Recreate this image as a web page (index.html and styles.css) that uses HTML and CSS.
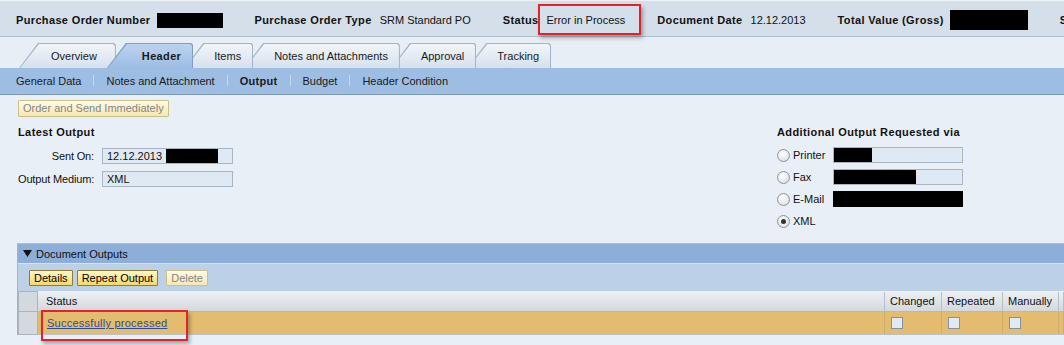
FILE: index.html
```html
<!DOCTYPE html>
<html lang="en">
  <head>
    <meta charset="UTF-8" />
    <meta name="viewport" content="width=device-width, initial-scale=1.0" />
    <title>Purchase Order - Output</title>
    <link rel="stylesheet" href="styles.css">
  </head>
  <body>
    <div class="po-header">
      <div class="hd-group">
        <span class="hd-label">Purchase Order Number</span>
        <span class="redact redact-po"></span>
      </div>
      <div class="hd-group">
        <span class="hd-label">Purchase Order Type</span>
        <span>SRM Standard PO</span>
      </div>
      <div class="hd-group">
        <span class="hd-label">Status</span>
        <span>Error in Process</span>
      </div>
      <div class="hd-group">
        <span class="hd-label">Document Date</span>
        <span>12.12.2013</span>
      </div>
      <div class="hd-group">
        <span class="hd-label">Total Value (Gross)</span>
        <span class="redact redact-total"></span>
      </div>
      <div class="hd-group">
        <span class="hd-label">Supplier</span>
      </div>
    </div>

    <div class="tabstrip">
      <div class="tab">Overview</div>
      <div class="tab tab-active">Header</div>
      <div class="tab">Items</div>
      <div class="tab">Notes and Attachments</div>
      <div class="tab">Approval</div>
      <div class="tab">Tracking</div>
    </div>

    <div class="subnav">
      <span>General Data</span>
      <span class="sep"></span>
      <span>Notes and Attachment</span>
      <span class="sep"></span>
      <span class="current">Output</span>
      <span class="sep"></span>
      <span>Budget</span>
      <span class="sep"></span>
      <span>Header Condition</span>
    </div>

    <div class="content">
      <button class="btn btn-off btn-order">Order and Send Immediately</button>

      <div class="output-cols">
        <div class="latest">
          <div class="section-title">Latest Output</div>
          <div class="field-row">
            <span class="field-label">Sent On:</span>
            <span class="field">12.12.2013<span class="redact redact-time"></span></span>
          </div>
          <div class="field-row">
            <span class="field-label">Output Medium:</span>
            <span class="field">XML</span>
          </div>
        </div>

        <div class="additional">
          <div class="section-title">Additional Output Requested via</div>
          <div class="radio-row">
            <span class="radio"></span>
            <span class="radio-label">Printer</span>
            <span class="field field-wide"><span class="redact redact-printer"></span></span>
          </div>
          <div class="radio-row">
            <span class="radio"></span>
            <span class="radio-label">Fax</span>
            <span class="field field-wide"><span class="redact redact-fax"></span></span>
          </div>
          <div class="radio-row">
            <span class="radio"></span>
            <span class="radio-label">E-Mail</span>
            <span class="field field-wide field-black"></span>
          </div>
          <div class="radio-row">
            <span class="radio radio-on"></span>
            <span class="radio-label">XML</span>
          </div>
        </div>
      </div>

      <div class="panel">
        <div class="panel-title">
          <svg width="9" height="7" viewBox="0 0 9 7"><path d="M0 0H9L4.5 7Z" fill="#111"/></svg>
          <span>Document Outputs</span>
        </div>
        <div class="toolbar">
          <button class="btn">Details</button>
          <button class="btn">Repeat Output</button>
          <button class="btn btn-off btn-delete">Delete</button>
        </div>
        <table class="grid">
          <colgroup>
            <col class="col-sel">
            <col>
            <col class="col-changed">
            <col class="col-repeated">
            <col class="col-manually">
            <col class="col-rest">
          </colgroup>
          <tr>
            <th class="sel"></th>
            <th class="th-status">Status</th>
            <th>Changed</th>
            <th>Repeated</th>
            <th>Manually</th>
            <th></th>
          </tr>
          <tr class="row-selected">
            <td class="sel"></td>
            <td class="td-status"><a href="#">Successfully processed</a></td>
            <td><span class="check"></span></td>
            <td><span class="check"></span></td>
            <td><span class="check"></span></td>
            <td></td>
          </tr>
        </table>
      </div>
    </div>

    <!-- red highlight marks from the screenshot -->
    <div class="mark mark-status"></div>
    <div class="mark mark-row"></div>
  </body>
</html>
```

FILE: styles.css
```css
* {
  box-sizing: border-box;
}

body {
  margin: 0;
  width: 1064px;
  height: 345px;
  overflow: hidden;
  position: relative;
  background: #e9eff6;
  font-family: "Liberation Sans", Arial, sans-serif;
  font-size: 11px;
  color: #111;
}

/* top header with PO facts */
.po-header {
  height: 37px;
  background: #d4dfea;
  border-top: 1px solid #eef3f8;
  border-bottom: 1px solid #aebfd0;
  display: flex;
  align-items: center;
  gap: 32px;
  padding: 3px 0 0 16px;
  white-space: nowrap;
  overflow: hidden;
}

.hd-group {
  display: flex;
  align-items: center;
  gap: 8px;
}

.hd-label {
  font-weight: bold;
  letter-spacing: 0.35px;
}

.redact {
  display: inline-block;
  background: #000;
}

.redact-po {
  width: 66px;
  height: 15px;
  margin-left: -2px;
}

.redact-total {
  width: 78px;
  height: 20px;
  margin-left: -2px;
}

/* tabs */
.tabstrip {
  height: 31px;
  background: #e7eef5;
  display: flex;
  align-items: flex-end;
  padding-left: 19px;
}

.tab {
  position: relative;
  height: 25px;
  line-height: 26px;
  padding: 0 12px 0 30px;
  margin-left: -9px;
  color: #1a1a1a;
  white-space: nowrap;
}

.tab::before,
.tab::after {
  content: "";
  position: absolute;
  z-index: -1;
  clip-path: polygon(0 100%, 19px 0, calc(100% - 2px) 0, 100% 2px, 100% 100%);
}

.tab::before {
  inset: 0;
  background: #a2b4c8;
}

.tab::after {
  inset: 1px 1px 0 1px;
  background: linear-gradient(#f1f5fa, #d6e1ee);
}

.tab:nth-child(1) {
  margin-left: 0;
  padding: 0 19px 0 32px;
  z-index: 6;
}

.tab:nth-child(3) {
  z-index: 4;
}

.tab:nth-child(4) {
  z-index: 3;
}

.tab:nth-child(5) {
  z-index: 2;
}

.tab:nth-child(6) {
  z-index: 1;
}

.tab-active {
  z-index: 10;
  padding-left: 35px;
  font-weight: bold;
  letter-spacing: 0.35px;
}

.tab-active::before {
  background: #7f9dc3;
}

.tab-active::after {
  background: linear-gradient(#bcd3ee, #9dbde3);
}

/* second level navigation */
.subnav {
  height: 27px;
  background: #9dbde3;
  border-bottom: 1px solid #7d98b9;
  display: flex;
  align-items: center;
  padding: 0 0 1px 16px;
  color: #1a1a1a;
}

.subnav .sep {
  width: 1px;
  height: 11px;
  background: #c9d9ec;
  margin: 0 12px;
}

.subnav .current {
  font-weight: bold;
  letter-spacing: 0.3px;
}

/* page content */
.content {
  padding: 5px 0 0 18px;
}

.btn {
  font: inherit;
  height: 16px;
  padding: 0 4px;
  margin: 0;
  border: 1px solid #8d7b3a;
  border-radius: 1px;
  background: linear-gradient(#fff6c6, #f5d96b);
  color: #000;
  line-height: 13px;
  cursor: pointer;
}

.btn-off {
  border-color: #cdbf8c;
  background: linear-gradient(#fffbe4, #f6e8b3);
  color: #858585;
  cursor: default;
}

.btn-order {
  height: 17px;
  padding: 0 4px;
}

.output-cols {
  display: flex;
  justify-content: space-between;
  margin-top: 8px;
}

.section-title {
  font-weight: bold;
  letter-spacing: 0.4px;
  line-height: 14px;
  margin-bottom: 5px;
}

.field-row {
  display: flex;
  align-items: center;
  height: 23px;
}

.field-label {
  flex-shrink: 0;
  width: 76px;
  margin-right: 8px;
  text-align: right;
  white-space: nowrap;
  letter-spacing: -0.15px;
}

.field {
  display: flex;
  align-items: center;
  width: 131px;
  height: 16px;
  padding-left: 4px;
  border: 1px solid #a9b5c2;
  background: #dfe9f4;
}

.redact-time {
  width: 52px;
  height: 14px;
  margin-left: 4px;
}

.additional {
  width: 287px;
}

.radio-row {
  display: flex;
  align-items: center;
  height: 22px;
}

.radio {
  position: relative;
  width: 13px;
  height: 13px;
  margin-right: 3px;
  border-radius: 50%;
  border: 1px solid #8c939b;
  background: radial-gradient(circle at 40% 35%, #ffffff, #d3d9e0);
}

.radio-on::after {
  content: "";
  position: absolute;
  left: 3px;
  top: 3px;
  width: 5px;
  height: 5px;
  border-radius: 50%;
  background: #333;
}

.radio-label {
  width: 40px;
}

.field-wide {
  width: 130px;
  padding-left: 0;
}

.field-black {
  background: #000;
  border-color: #000;
}

.redact-printer {
  width: 38px;
  height: 14px;
}

.redact-fax {
  width: 82px;
  height: 14px;
}

/* document outputs panel */
.panel {
  margin-top: 11px;
  margin-left: -1px;
  border-left: 1px solid #9fb3c9;
}

.panel-title {
  height: 20px;
  background: #8daed8;
  border-top: 1px solid #a6c0e0;
  display: flex;
  align-items: center;
  gap: 4px;
  padding-left: 5px;
}

.toolbar {
  height: 28px;
  background: #bcd1e8;
  border-top: 1px solid #d6e3f1;
  display: flex;
  align-items: flex-start;
  gap: 4px;
  padding: 6px 0 0 11px;
}

.btn-delete {
  margin-left: 4px;
}

.grid {
  width: 1046px;
  table-layout: fixed;
  border-collapse: collapse;
}

.col-sel {
  width: 19px;
}

.col-changed {
  width: 57px;
}

.col-repeated {
  width: 61px;
}

.col-manually {
  width: 56px;
}

.col-rest {
  width: 5px;
}

.grid th {
  height: 20px;
  padding: 0 5px;
  text-align: left;
  font-weight: normal;
  white-space: nowrap;
  background: linear-gradient(#eceff2, #d3d8dd);
  border-right: 1px solid #b5bfc9;
  border-bottom: 1px solid #b0bac4;
}

.grid th.th-status {
  padding-left: 8px;
}

.grid td {
  height: 23px;
  padding: 0 6px;
  background: #e3bc6f;
  border-right: 1px solid #cfae6c;
  border-bottom: 1px solid #b9c2cb;
}

.grid .sel {
  background: #d4d9df;
  border: 1px solid #aab4bf;
}

.grid td.td-status {
  padding-left: 9px;
}

.td-status a {
  color: #2b4c9e;
  text-decoration: underline;
  letter-spacing: 0.25px;
}

.check {
  display: block;
  width: 12px;
  height: 12px;
  border: 1px solid #8592a0;
  background: #e0eaf5;
}

/* red highlight frames */
.mark {
  position: absolute;
  border: 2px solid #e4222b;
  box-shadow: 2px 3px 4px rgba(0, 0, 0, 0.3);
}

.mark-status {
  left: 538px;
  top: 4px;
  width: 103px;
  height: 31px;
}

.mark-row {
  left: 41px;
  top: 310px;
  width: 147px;
  height: 31px;
}
```
